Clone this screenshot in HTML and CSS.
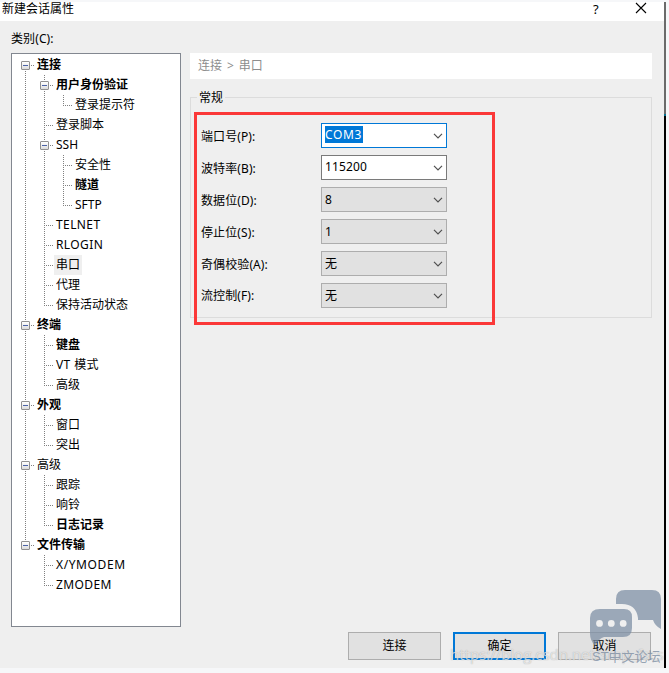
FILE: index.html
```html
<!DOCTYPE html>
<html lang="zh-CN">
<head>
<meta charset="utf-8">
<title>新建会话属性</title>
<link rel="stylesheet" href="styles.css">
</head>
<body>
<div class="dialog">
  <header class="titlebar">
    <span class="title">新建会话属性</span>
    <span class="help">?</span>
    <svg class="close" width="12" height="12" viewBox="0 0 12 12"><path d="M1 1 11 11M11 1 1 11" stroke="#000" stroke-width="1.1" fill="none"/></svg>
  </header>
  <main class="content">
    <aside class="sidebar">
      <div class="caption">类别(C):</div>
      <ul class="tree">
        <li><div class="row"><i class="box"></i><b>连接</b></div>
          <ul>
            <li><div class="row"><i class="box"></i><b>用户身份验证</b></div>
              <ul><li><div class="row leaf"><span>登录提示符</span></div></li></ul></li>
            <li><div class="row leaf"><span>登录脚本</span></div></li>
            <li><div class="row"><i class="box"></i><span>SSH</span></div>
              <ul>
                <li><div class="row leaf"><span>安全性</span></div></li>
                <li><div class="row leaf"><b>隧道</b></div></li>
                <li><div class="row leaf"><span>SFTP</span></div></li>
              </ul></li>
            <li><div class="row leaf"><span class="latin">TELNET</span></div></li>
            <li><div class="row leaf"><span class="latin">RLOGIN</span></div></li>
            <li><div class="row leaf"><span class="current">串口</span></div></li>
            <li><div class="row leaf"><span>代理</span></div></li>
            <li><div class="row leaf"><span>保持活动状态</span></div></li>
          </ul></li>
        <li><div class="row"><i class="box"></i><b>终端</b></div>
          <ul>
            <li><div class="row leaf"><b>键盘</b></div></li>
            <li><div class="row leaf"><span class="latin">VT 模式</span></div></li>
            <li><div class="row leaf"><span>高级</span></div></li>
          </ul></li>
        <li><div class="row"><i class="box"></i><b>外观</b></div>
          <ul>
            <li><div class="row leaf"><span>窗口</span></div></li>
            <li><div class="row leaf"><span>突出</span></div></li>
          </ul></li>
        <li><div class="row"><i class="box"></i><span>高级</span></div>
          <ul>
            <li><div class="row leaf"><span>跟踪</span></div></li>
            <li><div class="row leaf"><span>响铃</span></div></li>
            <li><div class="row leaf"><b>日志记录</b></div></li>
          </ul></li>
        <li><div class="row"><i class="box"></i><b>文件传输</b></div>
          <ul>
            <li><div class="row leaf"><span class="latin wide">X/YMODEM</span></div></li>
            <li><div class="row leaf"><span class="latin">ZMODEM</span></div></li>
          </ul></li>
      </ul>
    </aside>
    <section class="panel">
      <div class="crumbs">连接 &gt; 串口</div>
      <fieldset class="group">
        <legend>常规</legend>
        <div class="form">
          <label>端口号(P):</label><div class="combo focus"><mark>COM3</mark><svg width="10" height="6" viewBox="0 0 10 6"><path d="M1 .8 5 4.8 9 .8"/></svg></div>
          <label>波特率(B):</label><div class="combo edit"><span>115200</span><svg width="10" height="6" viewBox="0 0 10 6"><path d="M1 .8 5 4.8 9 .8"/></svg></div>
          <label>数据位(D):</label><div class="combo"><span>8</span><svg width="10" height="6" viewBox="0 0 10 6"><path d="M1 .8 5 4.8 9 .8"/></svg></div>
          <label>停止位(S):</label><div class="combo"><span>1</span><svg width="10" height="6" viewBox="0 0 10 6"><path d="M1 .8 5 4.8 9 .8"/></svg></div>
          <label>奇偶校验(A):</label><div class="combo"><span>无</span><svg width="10" height="6" viewBox="0 0 10 6"><path d="M1 .8 5 4.8 9 .8"/></svg></div>
          <label>流控制(F):</label><div class="combo"><span>无</span><svg width="10" height="6" viewBox="0 0 10 6"><path d="M1 .8 5 4.8 9 .8"/></svg></div>
        </div>
      </fieldset>
    </section>
  </main>
  <footer class="actions">
    <button>连接</button>
    <button class="primary">确定</button>
    <button>取消</button>
  </footer>
</div>
<div class="highlight"></div>
<div class="url">https://blog.csdn.net/smp_fscs</div>
<svg class="bubbles" width="74" height="60" viewBox="0 0 74 60">
  <path d="M26 14V11Q26 2 35 2H62Q71 2 71 11V41Q65 38 63 32H48V30Q46 16 32 16H26Z"/>
  <path fill-rule="evenodd" d="M10 21H34Q42 21 42 29V40Q42 49 33 49H14Q8 51 5 58Q0 52 0 46V30Q0 21 10 21ZM9.500 32a3.400 3.400 0 1 0 0 6.800a3.400 3.400 0 1 0 0-6.800ZM21.300 32a3.400 3.400 0 1 0 0 6.800a3.400 3.400 0 1 0 0-6.800ZM33.200 32a3.400 3.400 0 1 0 0 6.800a3.400 3.400 0 1 0 0-6.800Z"/>
</svg>
<div class="forum">ST中文论坛</div>
</body>
</html>
```
FILE: styles.css
```css
* { box-sizing: border-box; }
body {
  margin: 0;
  height: 673px;
  padding-top: 2px;
  overflow: hidden;
  position: relative;
  background: #f6f7f9;
  color: #000;
  font: 12px/20px "Noto Sans", "Noto Sans CJK SC", sans-serif;
}
ul { list-style: none; margin: 0; padding: 0; }
.dialog {
  width: 666px;
  height: 666px;
  display: flex;
  flex-direction: column;
  background: linear-gradient(#6b6b6b 0 112px, #087090 112px 114px, #000 114px) right / 2px 100% no-repeat, #efefef;
}
.titlebar {
  width: 664px;
  height: 19px;
  display: flex;
  align-items: flex-start;
  background: #fff;
  padding-left: 2px;
}
.title { line-height: 14px; flex: 1; }
.help { font-size: 13px; line-height: 14px; width: 8px; margin-right: 34px; }
.close { margin-right: 17px; }
.content { display: flex; height: 606px; }
.sidebar { width: 190px; padding: 8px 0 0 11px; }
.caption { height: 24px; letter-spacing: .1px; }
.tree {
  width: 170px;
  height: 574px;
  border: 1px solid #828790;
  background: #fff;
  padding: 1px 0 0 13px;
}
.tree li {
  background: repeating-linear-gradient(#808080 0 1px, transparent 1px 2px) 0 0 / 1px 100% no-repeat;
}
.tree > li:first-child { background-position: 0 10px; }
.tree li:last-child { background-size: 1px 11px; }
.tree ul { margin-left: 19px; }
.row {
  display: flex;
  align-items: center;
  height: 20px;
  padding-left: 12px;
  background: repeating-linear-gradient(90deg, #808080 0 1px, transparent 1px 2px) 0 10px / 9px 1px no-repeat;
}
.row b, .row span { white-space: nowrap; }
.row .latin { letter-spacing: .4px; }
.row .wide { letter-spacing: .6px; }
.row .current { background: #efefef; margin-left: -2px; padding: 0 2px; }
.box {
  flex: none;
  width: 9px;
  height: 9px;
  margin: 1px 7px 0 -16px;
  border: 1px solid #919191;
  border-radius: 1px;
  background: linear-gradient(#4b63a7, #4b63a7) center / 5px 1px no-repeat, linear-gradient(#fff, #ddd);
}
.panel { width: 462px; padding-top: 32px; }
.crumbs { height: 26px; background: #fff; color: #8d8d8d; padding-left: 8px; line-height: 25px; word-spacing: 1.8px; }
.group {
  height: 231px;
  margin: 8px 0 0;
  padding: 0 0 0 10px;
  border: 1px solid #dcdcdc;
}
.group legend { height: 20px; line-height: 22px; padding: 0 2px; margin-left: -4px; }
.form {
  display: grid;
  grid-template-columns: 120px 126px;
  grid-auto-rows: 25px;
  row-gap: 7px;
  padding-top: 16px;
}
.form label { line-height: 27px; letter-spacing: .1px; }
.form label:last-of-type { line-height: 25px; }
.combo {
  display: flex;
  justify-content: space-between;
  align-items: center;
  padding: 0 3px;
  border: 1px solid #adadad;
  background: #e1e1e1;
}
.combo.edit { background: #fff; border-color: #7a7a7a; }
.combo.edit span { margin-bottom: 2px; letter-spacing: .15px; }
.combo.focus { background: #fff; border-color: #0078d7; }
.combo svg { fill: none; stroke: #505050; stroke-width: 1.2; }
.combo mark { background: #0078d7; color: #fff; line-height: 17px; height: 17px; width: 38px; margin-bottom: 2px; letter-spacing: .6px; }
.actions { width: 651px; display: flex; justify-content: flex-end; gap: 12px; padding-top: 5px; }
.actions button {
  width: 93px;
  height: 28px;
  padding: 0;
  border: 1px solid #adadad;
  background: #e1e1e1;
  color: #000;
  font: inherit;
}
.actions .primary { border: 2px solid #0078d7; }
.highlight {
  position: absolute;
  left: 194px;
  top: 112px;
  width: 301px;
  height: 213px;
  border: 3px solid #fb3838;
}
.url {
  position: absolute;
  left: 450px;
  top: 644px;
  color: rgba(255, 255, 255, .65);
  font: 15px/20px "Open Sans", sans-serif;
  text-shadow: 0 0 1px rgba(120, 120, 120, .65);
  white-space: nowrap;
}
.bubbles { position: absolute; left: 590px; top: 588px; fill: rgba(126, 143, 164, .74); }
.forum {
  position: absolute;
  left: 592px;
  top: 648px;
  color: rgba(126, 143, 164, .8);
  font: 13px/18px "Liberation Sans", "Noto Sans CJK SC", sans-serif;
  white-space: nowrap;
}
```
